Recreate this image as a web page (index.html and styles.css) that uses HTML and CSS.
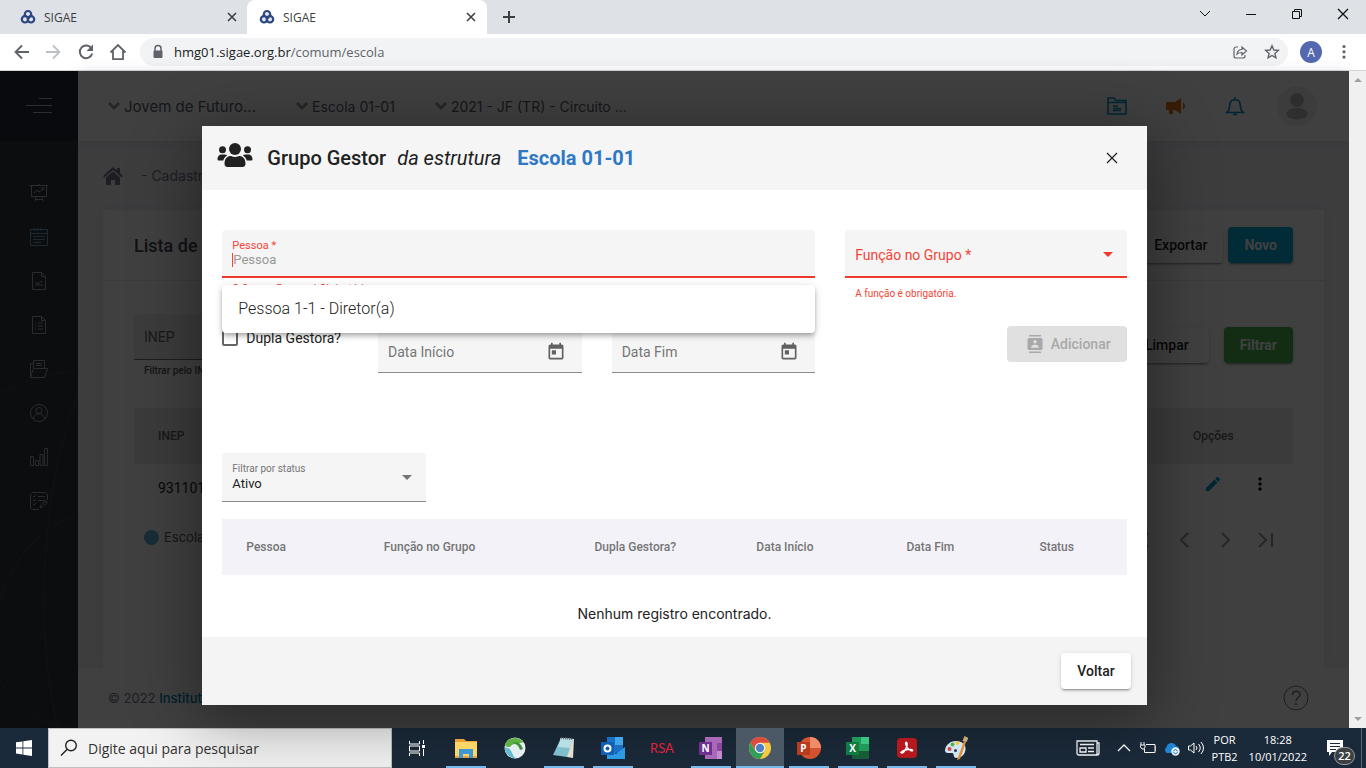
FILE: index.html
```html
<!DOCTYPE html>
<html lang="pt-BR">
<head>
<meta charset="utf-8">
<title>SIGAE</title>
<link rel="stylesheet" href="styles.css">
</head>
<body>
<svg class="defs" aria-hidden="true">
  <symbol id="sigae" viewBox="0 0 16 16"><circle cx="8" cy="8.500" r="5" fill="#2c4680"/><g fill="#dfe4ee" stroke="#2c4680" stroke-width="2.200"><circle cx="8" cy="5.200" r="3.200"/><circle cx="5" cy="10.300" r="3.200"/><circle cx="11" cy="10.300" r="3.200"/></g><path d="M6 7l5 1.500-3.500 3z" fill="#2c4680"/></symbol>
  <symbol id="x" viewBox="0 0 12 12"><path d="M2 2l8 8M10 2l-8 8" fill="none" stroke="currentColor" stroke-width="1.600"/></symbol>
  <symbol id="thinx" viewBox="0 0 12 12"><path d="M1 1l10 10M11 1L1 11" fill="none" stroke="currentColor" stroke-width="1.300"/></symbol>
  <symbol id="down" viewBox="0 0 12 12"><path d="M0 4l2-2 4 4 4-4 2 2-6 6z" fill="currentColor"/></symbol>
  <symbol id="cal" viewBox="0 0 24 24"><path d="M19 3h-1V1h-2v2H8V1H6v2H5a2 2 0 0 0-2 2v14c0 1.100.900 2 2 2h14a2 2 0 0 0 2-2V5a2 2 0 0 0-2-2zm0 16H5V8h14v11zM7 10h5v5H7z" fill="currentColor"/></symbol>
  <symbol id="prev" viewBox="0 0 20 20"><path d="M13 3l-7 7 7 7" fill="none" stroke="currentColor" stroke-width="2"/></symbol>
  <symbol id="next" viewBox="0 0 20 20"><path d="M7 3l7 7-7 7" fill="none" stroke="currentColor" stroke-width="2"/></symbol>
</svg>

<header class="browser">
  <div class="tabstrip">
    <div class="tab"><svg class="i16"><use href="#sigae"/></svg><span class="tab-title">SIGAE</span><button class="bare" aria-label="Fechar guia"><svg class="i12"><use href="#x"/></svg></button></div>
    <div class="tab tab-active"><svg class="i16"><use href="#sigae"/></svg><span class="tab-title">SIGAE</span><button class="bare" aria-label="Fechar guia"><svg class="i12"><use href="#x"/></svg></button></div>
    <button class="bare newtab" aria-label="Nova guia"><svg class="i12" viewBox="0 0 12 12"><path d="M6 0v12M0 6h12" stroke="currentColor" stroke-width="2"/></svg></button>
    <div class="winctl">
      <button class="bare" aria-label="Pesquisar guias"><svg class="i12" viewBox="0 0 12 12"><path d="M1 3l5 5 5-5" fill="none" stroke="currentColor"/></svg></button>
      <button class="bare" aria-label="Minimizar"><svg class="i12" viewBox="0 0 12 12"><path d="M1 6.500h10" stroke="currentColor"/></svg></button>
      <button class="bare" aria-label="Restaurar"><svg class="i12" viewBox="0 0 12 12"><path d="M1.500 3.500h7v7h-7zM3.500 3.500v-2h7v7h-2" fill="none" stroke="currentColor"/></svg></button>
      <button class="bare" aria-label="Fechar"><svg class="i12"><use href="#thinx"/></svg></button>
    </div>
  </div>
  <div class="toolbar">
    <button class="bare" aria-label="Voltar"><svg class="i20" viewBox="0 0 20 20"><path d="M17 10H4M10 3.500L3.500 10l6.500 6.500" fill="none" stroke="currentColor" stroke-width="1.800"/></svg></button>
    <button class="bare off" aria-label="Avançar"><svg class="i20" viewBox="0 0 20 20"><path d="M2 10h13M9 3.500l6.500 6.500L9 16.500" fill="none" stroke="currentColor" stroke-width="1.800"/></svg></button>
    <button class="bare" aria-label="Recarregar"><svg class="i20" viewBox="0 0 20 20"><path d="M15.500 6.500A6.300 6.300 0 1 0 16.200 11.500" fill="none" stroke="currentColor" stroke-width="2"/><path d="M17 2.500V9h-6.500z" fill="currentColor"/></svg></button>
    <button class="bare" aria-label="Página inicial"><svg class="i20" viewBox="0 0 20 20"><path d="M2.500 10.500L10 3l7.500 7.500M5 9v8.200h10V9" fill="none" stroke="currentColor" stroke-width="1.800"/></svg></button>
    <div class="omnibox">
      <svg class="i16" viewBox="0 0 16 16"><path d="M5 7V4.500a3 3 0 0 1 6 0V7" fill="none" stroke="currentColor" stroke-width="1.500"/><rect x="3.500" y="6.500" width="9" height="7.500" rx="1" fill="currentColor"/></svg>
      <span class="url"><b>hmg01.sigae.org.br</b>/comum/escola</span>
      <button class="bare" aria-label="Compartilhar"><svg class="i16" viewBox="0 0 16 16"><path d="M6 3H4a2 2 0 0 0-2 2v7a2 2 0 0 0 2 2h7a2 2 0 0 0 2-2v-1M5 10c.5-3 2-4.500 5-4.500V3l4.500 4L10 11V8.500C7.500 8.500 6 9 5 10z" fill="none" stroke="currentColor" stroke-width="1.200"/></svg></button>
      <button class="bare" aria-label="Favoritar"><svg class="i16" viewBox="0 0 16 16"><path d="M8 1.800l1.800 4.200 4.500.4-3.400 3 1 4.500L8 11.500l-3.900 2.400 1-4.500-3.400-3 4.500-.4z" fill="none" stroke="currentColor" stroke-width="1.400"/></svg></button>
    </div>
    <button class="bare profile" aria-label="Perfil">A</button>
    <button class="bare" aria-label="Menu"><svg class="i20" viewBox="0 0 20 20"><g fill="currentColor"><circle cx="10" cy="4.500" r="1.600"/><circle cx="10" cy="9.800" r="1.600"/><circle cx="10" cy="15.100" r="1.600"/></g></svg></button>
  </div>
</header>

<div class="window">
  <div class="page">
    <aside class="sidebar">
      <svg class="sidebar-art" viewBox="0 0 78 657" preserveAspectRatio="none" fill="none" stroke="#3c4254" aria-hidden="true"><path d="M0 322Q35 304 78 299M78 443C-10 475-22 590 10 625Q35 652 70 657M78 324C40 420 35 560 58 657" stroke-width="1.500"/></svg>
      <button class="bare brand" aria-label="Abrir menu"><svg class="i26" viewBox="0 0 26 18"><path d="M13 1.500h13M0 8.500h26M7 15.500h19" stroke="currentColor"/></svg></button>
      <nav class="menu" aria-label="Principal">
        <a href="#" aria-label="Painel"><svg class="i18" viewBox="0 0 18 18"><path d="M0 1.500h18M1.500 1.500v11h15v-11M9 0v1M5 15.500h8M6 13l-1 4M12 13l1 4M4 9l3-3 2 2 5-4M11 4h3v2"/></svg></a>
        <a href="#" aria-label="Calendário"><svg class="i18 blue" viewBox="0 0 18 18"><path d="M.5 1.500h17v16H.5zM.5 5.500h17M5 0v3M8 0v3M11 0v3M3 8.500h12M3 11.500h12M3 14.500h8"/></svg></a>
        <a href="#" aria-label="Relatório"><svg class="i18" viewBox="0 0 18 18"><path d="M2.500.5h9l4 4v13h-13zM11.500.5v4h4M5 13h8M5 10l3 2 4-3"/></svg></a>
        <a href="#" aria-label="Lista"><svg class="i18" viewBox="0 0 18 18"><path d="M2.500.5h9l4 4v13h-13zM11.500.5v4h4M5 7h1M8 7h5M5 10h1M8 10h5M5 13h1M8 13h5"/></svg></a>
        <a href="#" aria-label="Documentos"><svg class="i18" viewBox="0 0 18 18"><path d="M.5 17.500v-14h3M3.500 8V.5h11V8M6 3.500h6M6 5.500h6M.5 17.500l3-9h14l-3 9z"/></svg></a>
        <a href="#" aria-label="Pessoas"><svg class="i18" viewBox="0 0 18 18"><circle cx="9" cy="9" r="8.500"/><circle cx="9" cy="6.500" r="3"/><path d="M3.500 15c0-7 11-7 11 0"/></svg></a>
        <a href="#" aria-label="Indicadores"><svg class="i18" viewBox="0 0 18 18"><path d="M.5 8.500h3v9h-3zM5.500 12.500h3v5h-3zM10 6.500h3v11h-3zM14.500.5h3v17h-3z"/></svg></a>
        <a href="#" aria-label="Tarefas"><svg class="i18" viewBox="0 0 18 18"><path d="M9 17.500H4A3 3 0 0 1 .5 14V4A3 3 0 0 1 4 .5h10A3 3 0 0 1 17.500 4v4M3 4l1 1 2-2M8 4.500h7M3 8l1 1 2-2M8 8.500h7M3 12l1 1 2-2M10 16l1-3 5-4 1.500 1.500-5 4.500z"/></svg></a>
      </nav>
    </aside>
    <div class="content">
      <div class="topbar">
        <a href="#" class="picker picker-program"><svg class="i12"><use href="#down"/></svg>Jovem de Futuro...</a>
        <a href="#" class="picker"><svg class="i12"><use href="#down"/></svg>Escola 01-01</a>
        <a href="#" class="picker"><svg class="i12"><use href="#down"/></svg>2021 - JF (TR) - Circuito ...</a>
        <div class="topicons">
          <svg class="i20 cyan" viewBox="0 0 20 20"><path d="M1 2h6l2 2.500h10V18H1zM1 6.500h18" fill="none" stroke="currentColor" stroke-width="1.600"/><path d="M6 10h5M6 12.500h8M6 14.500h8" stroke="currentColor" stroke-width="1.500"/></svg>
          <svg class="i20 orange" viewBox="0 0 20 20"><path d="M0 6h9l6-4v16l-6-4H7v4H3v-4H0zM17 6q4 4 0 8z" fill="currentColor"/></svg>
          <svg class="i20 cyan" viewBox="0 0 20 20"><path d="M2 16.500c3-2 2-5 3-9 1-5 9-5 10 0 1 4 0 7 3 9zM8 18.500h4M10 1v2" fill="none" stroke="currentColor" stroke-width="1.700"/></svg>
          <svg class="i40" viewBox="0 0 40 40"><circle cx="20" cy="20" r="20" fill="#ededed"/><circle cx="20" cy="14" r="7" fill="#b8b8b8"/><path d="M9.500 28c0-8 21-8 21 0 0 7-21 7-21 0z" fill="#b8b8b8"/></svg>
        </div>
      </div>
      <div class="crumbs"><svg class="i20" viewBox="0 0 20 20"><path d="M0 10L10 1l4 3.500V2h3v5l3 3-1.200 1.500L10 4 1.200 11.500zM3 11.500L10 5.500l7 6V19h-5v-5H8v5H3z" fill="currentColor"/></svg><span>- Cadastros</span></div>
      <section class="card">
        <div class="card-head"><h2>Lista de</h2><button class="btn">Exportar</button><button class="btn btn-blue">Novo</button></div>
        <div class="card-body">
          <div class="filters">
            <div class="inep"><input class="inep-input" id="inep" placeholder="INEP"><label for="inep">Filtrar pelo INEP</label></div>
            <button class="btn btn-wide">Limpar</button><button class="btn btn-green">Filtrar</button>
          </div>
          <table class="schools">
            <thead><tr><th>INEP</th><th class="opts">Opções</th></tr></thead>
            <tbody><tr><td>93110101</td><td class="opts"><div class="acts">
              <svg class="i16 cyan" viewBox="0 0 16 16"><path d="M1 12v3h3l8.500-8.500-3-3zM14.700 4.300l-1.400 1.400-3-3 1.400-1.400q.8-.8 1.600 0l1.400 1.400q.8.8 0 1.600z" fill="currentColor"/></svg>
              <svg class="i16" viewBox="0 0 16 16"><circle cx="8" cy="3" r="1.700"/><circle cx="8" cy="8" r="1.700"/><circle cx="8" cy="13" r="1.700"/></svg>
            </div></td></tr></tbody>
          </table>
          <div class="legend"><i class="dot"></i><span>Escola</span>
            <div class="pager"><svg class="i20"><use href="#prev"/></svg><svg class="i20"><use href="#prev"/></svg><svg class="i20"><use href="#next"/></svg><svg class="i20" viewBox="0 0 20 20"><path d="M4 3l7 7-7 7M17 3v14" fill="none" stroke="currentColor" stroke-width="2"/></svg></div>
          </div>
        </div>
      </section>
      <footer class="foot"><span>© 2022 <a href="#">Instituto Unibanco</a></span><svg class="i26" viewBox="0 0 26 26" fill="none" stroke="currentColor"><circle cx="13" cy="13" r="12"/><path d="M9.500 10c0-5 7.500-5 7.500-.5 0 3-4 3-4 6.500M13 18v2" stroke-width="1.500"/></svg></footer>
    </div>
  </div>

  <div class="backdrop">
    <div class="modal" role="dialog" aria-labelledby="mt">
      <div class="modal-head">
        <svg class="people" viewBox="0 0 36 28" aria-hidden="true"><g fill="#212121"><circle cx="18" cy="8" r="6"/><circle cx="5.500" cy="8.800" r="3.500"/><circle cx="30.500" cy="8.800" r="3.500"/><path d="M7.500 23c0-7 4-8 6.500-8 3 1.200 5 1.200 8 0 2.500 0 6.500 1 6.500 8 0 2-1.500 3-3 3h-15c-1.500 0-3-1-3-3zM.5 18.500c0-3.500 2-5 4-5h3c1 0 2 .4 2.700 1-2.200 1.300-3.400 3-3.900 5H2c-1 0-1.500-.3-1.500-1zM35.500 18.500c0-3.500-2-5-4-5h-3c-1 0-2 .4-2.700 1 2.200 1.300 3.400 3 3.900 5H34c1 0 1.500-.3 1.500-1z"/></g></svg>
        <h1 id="mt"><span>Grupo Gestor</span><em>da estrutura</em><span class="school">Escola 01-01</span></h1>
        <button class="bare" aria-label="Fechar"><svg class="i12"><use href="#thinx"/></svg></button>
      </div>
      <div class="modal-body">
        <div class="grid">
          <div class="col8">
            <div class="field invalid"><label class="flabel" for="pessoa">Pessoa *</label><input id="pessoa" class="caret" placeholder="Pessoa"></div>
            <p class="error near">O Campo Pessoa é Obrigatório.</p>
            <ul class="options" role="listbox"><li role="option">Pessoa 1-1 - Diretor(a)</li></ul>
          </div>
          <div class="col4">
            <div class="field invalid single"><select aria-label="Função no Grupo"><option>Função no Grupo *</option></select><i class="arrow"></i></div>
            <p class="error">A função é obrigatória.</p>
          </div>
        </div>
        <div class="grid">
          <label class="check"><input type="checkbox">Dupla Gestora?</label>
          <div class="col3 field date"><input aria-label="Data Início" placeholder="Data Início"><svg class="i20"><use href="#cal"/></svg></div>
          <div class="col3 field date"><input aria-label="Data Fim" placeholder="Data Fim"><svg class="i20"><use href="#cal"/></svg></div>
          <div class="col4 end"><button class="add" disabled><svg class="i18" viewBox="0 0 24 24"><path d="M20 0H4v2h16V0zM4 24h16v-2H4v2zM20 4H4a2 2 0 0 0-2 2v12c0 1.100.900 2 2 2h16a2 2 0 0 0 2-2V6a2 2 0 0 0-2-2zm-8 2.800a2.200 2.200 0 1 1 0 4.400 2.200 2.200 0 0 1 0-4.400zM17 17H7v-1.500c0-1.700 3.300-2.500 5-2.500s5 .8 5 2.500V17z" fill="currentColor"/></svg>Adicionar</button></div>
        </div>
        <div class="grid status">
          <div class="col3 field"><label class="flabel grey" for="st">Filtrar por status</label><select id="st"><option>Ativo</option></select><i class="arrow"></i></div>
        </div>
        <table class="members">
          <colgroup><col class="c1"><col class="c2"><col class="c3"><col class="c4"><col class="c5"><col></colgroup>
          <thead><tr><th>Pessoa</th><th>Função no Grupo</th><th>Dupla Gestora?</th><th>Data Início</th><th>Data Fim</th><th>Status</th></tr></thead>
          <tbody><tr><td colspan="6">Nenhum registro encontrado.</td></tr></tbody>
        </table>
      </div>
      <div class="modal-foot"><button class="btn">Voltar</button></div>
    </div>
  </div>
  <div class="scroll" aria-hidden="true"><i class="up"></i><i class="dn"></i></div>
</div>

<footer class="taskbar">
  <button class="bare start" aria-label="Iniciar"><svg class="i16" viewBox="0 0 16 16" fill="#fff"><path d="M0 2.300l6.500-.9v6.100H0zM7.300 1.300L16 0v7.500H7.300zM0 8.400h6.500v6.100L0 13.600zM7.300 8.400H16V16l-8.700-1.300z"/></svg></button>
  <label class="search"><svg class="i18" viewBox="0 0 18 18"><circle cx="11" cy="6.500" r="5.300" fill="none" stroke="#222" stroke-width="1.400"/><path d="M7 10.500L1 16.500" stroke="#222" stroke-width="1.400"/></svg><input aria-label="Pesquisar" placeholder="Digite aqui para pesquisar"></label>
  <div class="apps">
    <button class="app" aria-label="Visão de tarefas"><svg class="i18" viewBox="0 0 18 18" fill="none" stroke="#fff"><path d="M1.500 2v3h10V2M1.500 7h10v5h-10zM1.500 17v-3h10v3M15.500 1v4M15.500 10v7"/><path d="M14 6h3v3h-3z" fill="#fff" stroke="none"/></svg></button>
    <button class="app open" aria-label="Explorador"><svg class="i24" viewBox="0 0 24 24"><path d="M1 3h9l2 2h11v17H1z" fill="#e8a33a"/><path d="M1 6h22v14H1z" fill="#fbd667"/><path d="M5 13h14v9h-4v-4H9v4H5z" fill="#3f97d3"/></svg></button>
    <button class="app" aria-label="Navegador"><svg class="i24" viewBox="0 0 24 24"><circle cx="12" cy="12" r="10.500" fill="#e4edf0"/><path d="M2 9C4 1 16-1 21 7c-3-1-5 0-6 2-3-2-6-1-8 2-2 0-4 0-5-2z" fill="#5fb043"/><path d="M9 7c4 0 7 3 8 7l3-1c-2-5-5-8-11-6z" fill="#3f8f3c"/><path d="M2 11c-1 6 5 11 11 11.500-4-3-4-8-7-10z" fill="#62bcd0"/></svg></button>
    <button class="app open" aria-label="Bloco de notas"><svg class="i24" viewBox="0 0 24 24"><path d="M8 2l14 1-1 19-6-1z" fill="#e2ddce"/><path d="M9 2l12 1-6 18-14-2z" fill="#7fbfcc"/><path d="M9 2l12 1-3 9-12-1z" fill="#b9dfe6"/><path d="M9 2l12 1" stroke="#666" stroke-width="2" stroke-dasharray="1 1"/></svg></button>
    <button class="app open" aria-label="Outlook"><svg class="i24" viewBox="0 0 24 24"><path d="M6 1h16v16H6z" fill="#1b6fc4"/><path d="M14 1h8v8h-8z" fill="#42a7ea"/><path d="M6 12l9 6 9-7v12H6z" fill="#2b9be6"/><path d="M0 6h13v13H0z" fill="#0f5fb5"/><circle cx="6.500" cy="12.500" r="3" fill="none" stroke="#fff" stroke-width="2"/></svg></button>
    <button class="app rsa" aria-label="RSA SecurID">RSA</button>
    <button class="app open" aria-label="OneNote"><svg class="i24" viewBox="0 0 24 24"><path d="M6 1h17v22H6z" fill="#a968b8"/><path d="M18 7h5v8h-5z" fill="#8b48a0"/><path d="M18 15h5v8h-5z" fill="#c38ad0"/><path d="M0 6h13v13H0z" fill="#70308f"/></svg><span class="letter">N</span></button>
    <button class="app open active" aria-label="Chrome"><svg class="i24" viewBox="0 0 24 24"><circle cx="12" cy="12" r="11" fill="#f7c93e"/><path d="M2.500 6.500A11 11 0 0 1 21.600 6.800H12L7.500 15z" fill="#dc4b3e"/><path d="M2.500 6.500A11 11 0 0 0 12 23l4.500-8H7.400z" fill="#2f9e56"/><circle cx="12" cy="12" r="5.200" fill="#fff"/><circle cx="12" cy="12" r="4.200" fill="#4f7fc6"/></svg></button>
    <button class="app open" aria-label="PowerPoint"><svg class="i24" viewBox="0 0 24 24"><circle cx="13" cy="12" r="11" fill="#d35230"/><path d="M13 1a11 11 0 0 1 11 11H13z" fill="#f08b68"/><path d="M0 6h13v13H0z" fill="#b83b1d"/></svg><span class="letter">P</span></button>
    <button class="app open" aria-label="Excel"><svg class="i24" viewBox="0 0 24 24"><path d="M6 1h17v22H6z" fill="#1f9a59"/><path d="M15 1h8v7h-8z" fill="#3cc481"/><path d="M6 15h17v8H6z" fill="#185c37"/><path d="M0 6h13v13H0z" fill="#107c41"/></svg><span class="letter">X</span></button>
    <button class="app open" aria-label="Acrobat"><svg class="i24" viewBox="0 0 24 24"><rect x="2" y="2" width="20" height="20" rx="4" fill="#b5191d"/><path d="M7 17c2 0 6-7 5-10-1-2-2 0-1 2 1 3 4 6 6 6 2-1-1-2-4-1.500s-6 1.500-7 3z" fill="none" stroke="#fff" stroke-width="1.400"/></svg></button>
    <button class="app open" aria-label="Paint"><svg class="i24" viewBox="0 0 24 24"><path d="M1 14C2 5 14 2 20 8c4 5 0 14-7 14-5 0-2-5-5-5s-7 1-7-3z" fill="#cfe5f0"/><circle cx="5.500" cy="13" r="2" fill="#d94141"/><circle cx="8.500" cy="8.500" r="2" fill="#55b04b"/><circle cx="13.500" cy="7" r="2" fill="#f2c53c"/><circle cx="11.500" cy="14.500" r="1.500" fill="#29384a"/><path d="M13 24l7-19 2 1-6 17z" fill="#e38b36"/><path d="M18.500 5l2-5 4 2-2 4z" fill="#c9a878"/></svg></button>
  </div>
  <div class="tray">
    <svg class="i24 news" viewBox="0 0 24 24" fill="none" stroke="#fff" stroke-width="1.300"><path d="M1 5h20v14H3q-2 0-2-2zM21 7h2v10q0 2-2 2M4 12h6v4H4zM4 8.500h14M12 12h6M12 15.500h6"/></svg>
    <svg class="i16" viewBox="0 0 16 16" fill="none" stroke="#fff" stroke-width="1.300"><path d="M2 11l6-6 6 6"/></svg>
    <svg class="i16" viewBox="0 0 16 16" fill="none" stroke="#fff"><path d="M6 4.500h9v8H4.500V9M15 7h1v3h-1M1 2v3M4 2v3M0 5h5v2l-1 2H2L.5 7z"/></svg>
    <svg class="i16" viewBox="0 0 16 16"><path d="M3 13a3.500 3.500 0 0 1-.5-6A5 5 0 0 1 12 6q3 .5 3.500 4l-3 3z" fill="#2386d8"/><circle cx="11.500" cy="11.500" r="4.200" fill="#e9f2fa"/><path d="M9.500 11q2-3 4 0M13.500 12.500q-2 2.500-4 0" fill="none" stroke="#1668b8"/></svg>
    <svg class="i16" viewBox="0 0 16 16" fill="none" stroke="#fff"><path d="M.5 6v4h2L6 13V3L2.500 6zM8 6q2 2 0 4M10.500 4q3.500 4 0 8M13 2q5 6 0 12"/></svg>
    <div class="stack">POR<br>PTB2</div>
    <div class="stack clock">18:28<br>10/01/2022</div>
    <button class="bare notif" aria-label="Notificações"><svg class="i18" viewBox="0 0 18 18"><path d="M1 1h16v12H6l-3 4v-4H1z" fill="#fff"/><path d="M4 4.500h10M4 7.500h10M4 10.500h6" stroke="#1b2838"/></svg><span class="badge">22</span></button>
  </div>
  <button class="bare desktop" aria-label="Mostrar área de trabalho"></button>
</footer>
</body>
</html>
```
FILE: styles.css
```css
* { box-sizing: border-box; }
body {
  margin: 0;
  height: 100vh;
  display: flex;
  flex-direction: column;
  overflow: hidden;
  font-family: Roboto, "Liberation Sans", sans-serif;
  font-size: 14px;
  color: #212121;
}
button, input, select { font: inherit; color: inherit; }
a { color: inherit; text-decoration: none; }
svg { display: block; flex: none; }
.defs { position: absolute; width: 0; height: 0; }
.i12 { width: 12px; height: 12px; }
.i16 { width: 16px; height: 16px; }
.i18 { width: 18px; height: 18px; }
.i20 { width: 20px; height: 20px; }
.i24 { width: 24px; height: 24px; }
.i26 { width: 26px; height: 26px; }
.i40 { width: 40px; height: 40px; }
.bare {
  border: 0; background: none; padding: 0;
  display: flex; align-items: center; justify-content: center;
}

/* Browser frame */
.browser { font-family: "Open Sans", "Noto Sans", sans-serif; color: #3c4043; }
.tabstrip { display: flex; height: 34px; background: #dee1e6; }
.tab {
  display: flex; align-items: center; gap: 8px;
  width: 247px; padding: 0 9px 0 20px; font-size: 12px;
}
.tab-active { width: 240px; padding-left: 12px; padding-right: 10px; background: #fff; border-radius: 8px 8px 0 0; }
.tab-title { flex: 1; }
.newtab { width: 44px; }
.winctl { display: flex; margin-left: auto; height: 28px; color: #111; }
.winctl .bare { width: 46px; }
.toolbar {
  display: flex; align-items: center; gap: 12px; height: 37px;
  padding: 0 12px; background: #fff; border-bottom: 1px solid #d5d8d8; color: #5f6368;
}
.off { color: #bdc1c6; }
.omnibox {
  flex: 1; display: flex; align-items: center; gap: 16px;
  height: 28px; padding: 0 8px 0 10px; border-radius: 14px; background: #f1f3f4;
}
.url { flex: 1; margin-left: -8px; font-size: 13px; }
.url b { font-weight: 400; color: #202124; }
.profile { width: 22px; height: 22px; border-radius: 50%; background: #5468b0; color: #fff; font-size: 12px; }

/* Application page */
.window { flex: 1; min-height: 0; display: flex; position: relative; }
.page { flex: 1; min-width: 0; display: flex; background: #f2f3f8; }
.sidebar { position: relative; width: 78px; background: #2f343d; }
.sidebar-art { position: absolute; inset: 0; width: 100%; height: 100%; }
.brand { position: relative; width: 100%; height: 70px; background: #262a38; color: #b8b8b8; }
.menu { position: relative; display: flex; flex-direction: column; align-items: center; gap: 26px; padding-top: 43px; }
.menu svg { fill: none; stroke: #a2b1b8; }
.menu .blue { stroke: #6fa3c4; }
.content { flex: 1; min-width: 0; display: flex; flex-direction: column; font-family: Inter, "Open Sans", sans-serif; }
.topbar {
  display: flex; align-items: center; height: 70px; padding: 0 32px 0 30px; gap: 40px;
  background: #fff; box-shadow: 0 0 12px rgba(80, 70, 120, .15); color: #595d6e; font-size: 14px;
}
.picker { display: flex; align-items: center; gap: 4px; white-space: nowrap; }
.picker-program { width: 148px; font-size: 15px; }
.picker svg { color: #9a9a9a; }
.topicons { display: flex; align-items: center; gap: 39px; margin-left: auto; }
.topicons .i40 { margin-left: -7px; }
.cyan { color: #0597cc; }
.orange { color: #e0701a; }
.crumbs { display: flex; align-items: center; gap: 18px; height: 69px; padding-left: 25px; color: #74788d; font-size: 14px; }
.card { flex: 1; margin: 0 25px; background: #fff; box-shadow: 0 0 13px rgba(82, 63, 105, .08); font-family: Roboto, sans-serif; }
.card-head { display: flex; align-items: center; gap: 5px; height: 71px; padding: 0 31px; border-bottom: 1px solid #e4e5ee; }
.card-head h2 { flex: 1; margin: 0; font-size: 18px; font-weight: 500; color: #48465b; }
.btn {
  height: 36px; padding: 0 16px; border: 0; border-radius: 4px; background: #fff;
  font-size: 14px; font-weight: 500;
  box-shadow: 0 3px 1px -2px rgba(0, 0, 0, .2), 0 2px 2px rgba(0, 0, 0, .14), 0 1px 5px rgba(0, 0, 0, .12);
}
.btn-blue { background: #00aadc; color: #fff; font-weight: 700; }
.btn-green { background: #4caf50; color: #fff; font-weight: 700; }
.btn-wide { padding: 0 20px; }
.card-body { padding: 33px 31px 0; }
.filters { display: flex; gap: 15px; height: 94px; }
.filters .btn { margin-top: 13px; }
.inep { width: 280px; margin-right: auto; font-size: 10px; font-weight: 500; color: #555; }
.inep label { padding-left: 10px; }
.inep-input { width: 100%; height: 46px; margin-bottom: 5px; padding: 0 10px; border: 0; border-bottom: 1px solid #777; border-radius: 4px 4px 0 0; background: #eee; font-size: 14px; font-weight: 400; }
.inep-input::placeholder { color: #666; }
.schools { width: 100%; border-collapse: collapse; table-layout: fixed; }
.schools th { height: 56px; padding: 0 24px; background: #eaeaee; text-align: left; font-size: 12px; font-weight: 500; color: #666; }
.schools td { height: 48px; padding: 0 24px; }
.schools .opts { width: 124px; padding-right: 0; }
.acts { display: flex; gap: 31px; padding-left: 12px; margin-top: -8px; }
.legend { display: flex; align-items: center; gap: 5px; height: 50px; padding-left: 10px; font-family: Inter, sans-serif; font-size: 13px; color: #595d6e; }
.dot { width: 15px; height: 15px; border-radius: 50%; background: #5bb4d8; }
.pager { display: flex; gap: 20px; margin-left: auto; padding: 6px 18px 0 0; color: #999; }
.foot { display: flex; align-items: center; justify-content: space-between; height: 60px; padding: 0 40px 0 30px; background: #fff; color: #74788d; font-size: 13px; }
.foot a { color: #0082bb; font-weight: 500; }

/* Dialog */
.backdrop {
  position: absolute; inset: 0 17px 0 0; display: flex; align-items: flex-start; justify-content: center;
  padding-top: 55px; background: rgba(0, 0, 0, .75);
}
.modal { width: 70%; background: #fff; box-shadow: 0 11px 60px 4px rgba(0, 0, 0, .4); }
.modal-head { display: flex; align-items: center; gap: 14px; height: 64px; padding: 0 29px 0 15px; background: #f5f5f5; }
.people { width: 36px; height: 28px; margin-bottom: 6px; }
.modal-head h1 { flex: 1; display: flex; gap: 11px; margin: 0; font-size: 20px; line-height: 24px; font-weight: 500; }
.modal-head em { font-weight: 400; }
.school { color: #2f78c4; font-weight: 700; margin-left: 5px; }
.modal-body { padding: 40px 20px 0; }
.grid { display: grid; grid-template-columns: repeat(12, 1fr); column-gap: 30px; align-items: start; min-height: 95px; }
.col8 { grid-column: span 8; position: relative; }
.col4 { grid-column: span 4; }
.col3 { grid-column: span 3; }
.field { position: relative; display: flex; flex-direction: column; height: 48px; padding: 9px 10px 0; background: #f5f5f5; border-bottom: 1px solid #8c8c8c; border-radius: 4px 4px 0 0; }
.field input, .field select { width: 100%; border: 0; padding: 0; background: none; outline: 0; appearance: none; font-size: 13px; line-height: 16px; }
.field input::placeholder { color: #757575; opacity: 1; }
.flabel { font-size: 11px; line-height: 14px; color: #f44336; }
.grey { font-size: 10px; color: #757575; }
.invalid { border-bottom: 2px solid #f0382b; }
.field .caret { height: 14px; border-left: 1px solid #f44336; }
.field .caret::placeholder { color: #999; }
.field.single { padding: 0 10px; flex-direction: row; align-items: center; }
.single select { padding-top: 3px; color: #f44336; font-size: 14px; }
.arrow { position: absolute; right: 14px; top: 22px; border: 5px solid transparent; border-top-color: #757575; border-bottom: 0; }
.invalid .arrow { border-top-color: #f0382b; }
.error { margin: 0; padding: 10px 10px 0; font-size: 10px; line-height: 12px; color: #f44336; }
.near { padding-top: 5px; }
.options {
  position: absolute; z-index: 2; top: 55px; left: 0; right: 0; margin: 0; padding: 0; list-style: none;
  background: #fff; border-radius: 4px;
  box-shadow: 0 2px 4px -1px rgba(0, 0, 0, .2), 0 4px 5px rgba(0, 0, 0, .14), 0 1px 10px rgba(0, 0, 0, .12);
}
.options li { height: 48px; padding: 0 16px; line-height: 48px; font-size: 16px; font-weight: 300; }
.check { grid-column: span 2; display: flex; align-items: center; gap: 8px; padding-top: 5px; white-space: nowrap; }
.check input { appearance: none; width: 16px; height: 16px; margin: 0; border: 2px solid #666; border-radius: 2px; }
.field.date { flex-direction: row; align-items: center; justify-content: space-between; padding: 6px 16px 0 10px; }
.field.date input { flex: 1; min-width: 0; font-size: 14px; }
.date svg { color: #616161; }
.end { display: flex; justify-content: flex-end; padding-top: 1px; }
.add { display: flex; align-items: center; gap: 7px; height: 36px; padding: 0 16px 0 19px; border: 0; border-radius: 4px; background: #e0e0e0; color: #a8a8a8; font-weight: 500; }
.status { min-height: 66px; margin-top: 33px; }
.status .field { height: 49px; }
.members { width: 100%; border-collapse: collapse; table-layout: fixed; }
.members th { height: 56px; padding: 0 0 0 24px; background: #f2f2f8; text-align: left; font-size: 12px; font-weight: 500; color: #757575; }
.members td { padding: 29px 0 13px; text-align: center; font-family: Inter, sans-serif; font-size: 14px; line-height: 20px; }
.c1 { width: 15.2%; }
.c2 { width: 23.3%; }
.c3 { width: 17.9%; }
.c4 { width: 16.6%; }
.c5 { width: 14.7%; }
.modal-foot { display: flex; justify-content: flex-end; align-items: center; height: 68px; padding: 0 16px; background: #f4f4f4; }

.scroll { width: 17px; background: #f0f0f0; display: flex; flex-direction: column; justify-content: space-between; align-items: center; padding: 7px 0; }
.up, .dn { border: 4px solid transparent; }
.up { border-top: 0; border-bottom-color: #a0a0a0; }
.dn { border-bottom: 0; border-top-color: #a0a0a0; }

/* Taskbar */
.taskbar { display: flex; height: 40px; background: #1b2a3a; color: #fff; font-family: "Open Sans", "Noto Sans", sans-serif; }
.start { width: 48px; }
.search { display: flex; align-items: center; gap: 10px; width: 344px; padding: 0 11px; background: #f2f2f2; border: 1px solid #c0c0c0; }
.search input { flex: 1; border: 0; padding: 0; background: none; font-size: 14px; }
.search input::placeholder { color: #333; opacity: 1; }
.apps { display: flex; gap: 1px; padding-left: 1px; }
.app { position: relative; display: flex; align-items: center; justify-content: center; width: 48px; height: 40px; padding: 0; border: 0; background: none; }
.open::after { content: ""; position: absolute; bottom: 0; left: 4px; right: 4px; height: 2px; background: #76b9ed; }
.active { background: #4b5866; }
.active::after { left: 0; right: 0; }
.rsa { color: #e21f3a; font-family: Lato, sans-serif; font-size: 13px; }
.letter { position: absolute; left: 12px; width: 13px; text-align: center; color: #fff; font-size: 10px; font-weight: 700; }
.tray { display: flex; align-items: center; gap: 8px; margin-left: auto; padding-right: 6px; }
.news { margin-right: 8px; }
.stack { font-size: 11px; line-height: 17px; text-align: center; }
.clock { margin-left: 3px; }
.notif { position: relative; width: 40px; height: 40px; }
.badge { position: absolute; right: 0; bottom: 3px; width: 21px; height: 18px; border: 1px solid #999; border-radius: 9px; background: #3b4044; font-size: 11px; line-height: 16px; font-weight: 600; text-align: center; }
.desktop { width: 5px; border-left: 1px solid #5b6672; }
```
